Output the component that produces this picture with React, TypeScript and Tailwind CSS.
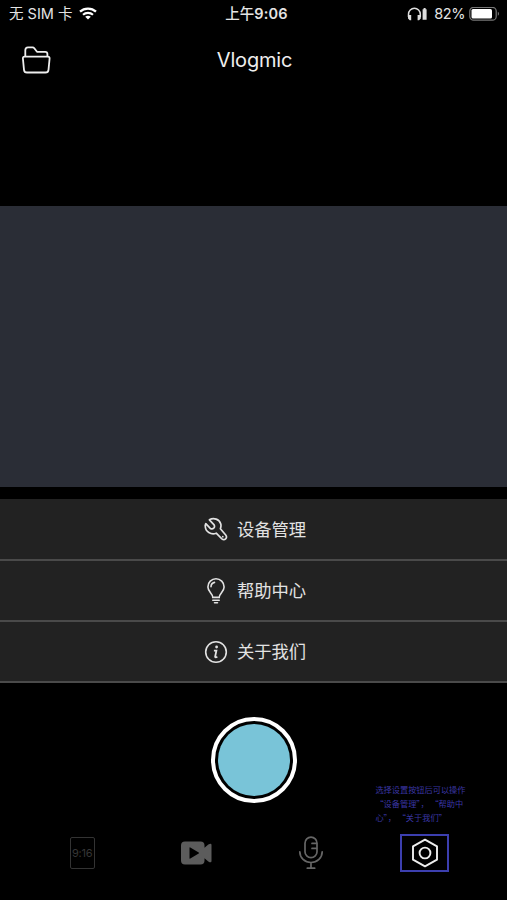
import type { ReactNode } from "react";

function StatusBar() {
  return (
    <div className="grid h-7 grid-cols-3 items-center pl-[9px] pr-[7px] text-[#e4e4e4]">
      <div className="flex items-center gap-[7px]">
        <span className="whitespace-pre text-[14.5px]">无 SIM 卡</span>
        <svg width="18" height="14" viewBox="0 0 18 13" fill="none">
          <path d="M1 4.2C5.5 0 12.5 0 17 4.2" stroke="white" strokeWidth="2.3" />
          <path d="M4 7.3C6.8 4.7 11.2 4.7 14 7.3" stroke="white" strokeWidth="2.1" />
          <path d="M9 12L6.2 9.3C7.8 7.9 10.2 7.9 11.8 9.3Z" fill="white" />
        </svg>
      </div>
      <span className="pl-1 text-center text-[14.5px] font-medium">
        上午<span className="font-semibold tracking-[0.2px]">9:06</span>
      </span>
      <div className="flex items-center justify-end">
        <svg className="mr-[6px]" width="21" height="14" viewBox="0 0 21 14" fill="none">
          <path d="M1.5 10V7.2a5.9 5.9 0 0 1 11.8 0V10" stroke="#dedede" strokeWidth="1.5" />
          <path d="M1 7.9h3.2v5.4H2.7L1 11.5zM13.8 7.9h-3.2v5.4h1.4l1.8-1.8z" fill="#dedede" />
          <path d="M15.6 2.2h1V1.1h2v1.1h1V12.8h-4z" fill="#dedede" />
        </svg>
        <span className="mr-[4px] text-[14.5px] tracking-[-0.4px]">82%</span>
        <svg width="31" height="15" viewBox="0 0 31 15" fill="none">
          <rect x="0.8" y="0.3" width="26.4" height="12.9" rx="3.8" stroke="#777" strokeWidth="1.2" />
          <rect x="2.5" y="2" width="20.5" height="9.5" rx="1.5" fill="white" />
          <path d="M28.8 4.8c1.6.5 1.6 3.5 0 4z" fill="#777" />
        </svg>
      </div>
    </div>
  );
}

function Header() {
  return (
    <header className="grid h-16 grid-cols-3 items-center px-[21px]">
      <svg width="30" height="28" viewBox="0 0 30 28" fill="none" stroke="#eee" strokeWidth="1.8" strokeLinejoin="round">
        <path d="M4.3 10.5V4.2Q4.3 1.4 7 1.4h4.6q1 0 1.7.9l2.7 3.5h8.2q2.2 0 2.2 2.2v2.5" />
        <path d="M3.7 10.6h23.1q2 0 1.8 1.9l-1.1 11.3q-.3 2.7-3 2.7H6q-2.7 0-3-2.7L1.9 12.5q-.2-1.9 1.8-1.9z" />
      </svg>
      <h1 className="pl-0.5 text-center text-[20px] tracking-[-0.2px] text-[#eee]">Vlogmic</h1>
    </header>
  );
}

function MenuRow({ icon, label }: { icon: ReactNode; label: string }) {
  return (
    <button className="flex h-[61px] w-full items-center border-b-2 border-[#4a4a4a] bg-[#222] pl-[203px] text-[#e2e2e2]">
      <span className="flex w-[25px] justify-center">{icon}</span>
      <span className="ml-[9px] text-[17.3px]">{label}</span>
    </button>
  );
}

function WrenchIcon() {
  return (
    <svg width="25" height="25" viewBox="0 0 25 25" fill="none" stroke="#e2e2e2" strokeWidth="1.7" strokeLinecap="round" strokeLinejoin="round">
      <path d="M6.4 2.8C10.7.3 16.3 2.2 17.7 6.8c.5 1.7.3 3.3-.3 4.9l5.3 6.3c2.2 2.9-1.2 6-3.8 3.8l-5.7-5.6c-5 2.1-11.1-1.5-10.9-7.3 0-.8.2-1.5.5-2.2l4.5 4.7c2.7 1.5 5.1-.8 3.8-3.6z" />
      <path d="M19.8 19.6v.1" />
    </svg>
  );
}

function BulbIcon() {
  return (
    <svg width="20" height="26" viewBox="0 0 20 26" fill="none" stroke="#e2e2e2" strokeWidth="1.6" strokeLinecap="round">
      <path d="M6.8 19.4c0-4-4.9-5.7-4.9-10.5a8.1 8.1 0 0 1 16.2 0c0 4.8-4.9 6.5-4.9 10.5z" />
      <path d="M5 8.8A4.6 4.6 0 0 1 8.5 4.4M6.8 22.2h6.4M8.5 24.7h3" />
    </svg>
  );
}

function InfoIcon() {
  return (
    <svg width="24" height="24" viewBox="0 0 24 24" fill="none" stroke="#e2e2e2">
      <circle cx="12" cy="12" r="10.3" strokeWidth="1.6" />
      <circle cx="12.6" cy="7" r="1.4" fill="#e2e2e2" stroke="none" />
      <path d="M9.9 10.6h2.5l-1.3 6.2q0 .8 2.3.2" strokeWidth="1.8" />
    </svg>
  );
}

function Shutter() {
  return (
    <button className="mx-auto mt-[34px] flex size-[86px] items-center justify-center rounded-full border-4 border-white">
      <span className="size-[72px] rounded-full bg-[#79c4d8]" />
    </button>
  );
}

function BottomNav() {
  return (
    <nav className="mt-[31px] grid h-[38px] grid-cols-4 items-center justify-items-center px-[25px]">
      <span className="flex h-8 w-[25px] items-center justify-center rounded-[2px] border-[1.5px] border-[#333] text-[11px] tracking-[-0.2px] text-[#363636]">
        9:16
      </span>
      <svg width="32" height="24" viewBox="0 0 32 24" fill="#5c5c5c">
        <path fillRule="evenodd" d="M5 .5h15.5q4 0 4 4v2.2l3.8-3.1q3.2-2 3.2.4v16q0 2.4-3.2.4l-3.8-3.1v2.2q0 4-4 4H5q-4 0-4-4v-15q0-4 4-4zM9.5 6.7v10.6q0 .8.8.3l8.4-5q.9-.6 0-1.2l-8.4-5q-.8-.5-.8.3z" />
      </svg>
      <svg width="26" height="34" viewBox="0 0 26 34" fill="none" stroke="#666" strokeWidth="1.7" strokeLinecap="round">
        <rect x="7" y="1.2" width="12" height="20.5" rx="6" />
        <path d="M14 7.4h4.5M14 12.4h4.5M1.8 15.8c0 6.2 5 10.7 11.2 10.7s11.2-4.5 11.2-10.7M13 26.5v5.7M9.3 32.2h7.4" />
      </svg>
      <div className="relative flex h-[38px] w-[49px] items-center justify-center border-2 border-[#3c3faf]">
        <svg width="28" height="30" viewBox="0 0 28 30" fill="none" stroke="#eee" strokeWidth="1.9" strokeLinejoin="round">
          <path d="M14 1.6L26 8.3v13.4l-12 6.7-12-6.7V8.3z" />
          <circle cx="14" cy="15" r="5.4" />
        </svg>
        <p className="absolute bottom-[46px] left-[-27px] whitespace-pre font-['Noto_Sans_CJK_SC',sans-serif] text-[8.2px] leading-[14px] text-[#3a36a4]">
          选择设置按钮后可以操作<br />
          {"“设备管理”， “帮助中"}<br />
          {"心”， “关于我们”"}
        </p>
      </div>
    </nav>
  );
}

export default function App() {
  return (
    <main className="h-[900px] w-[507px] overflow-hidden bg-black font-['Inter','Noto_Sans_CJK_SC',sans-serif]">
      <StatusBar />
      <Header />
      <section className="mt-[114px] h-[281px] bg-[#2a2d36]" />
      <section className="mt-3 bg-[#222] pt-px">
        <MenuRow icon={<WrenchIcon />} label="设备管理" />
        <MenuRow icon={<BulbIcon />} label="帮助中心" />
        <MenuRow icon={<InfoIcon />} label="关于我们" />
      </section>
      <Shutter />
      <BottomNav />
    </main>
  );
}
